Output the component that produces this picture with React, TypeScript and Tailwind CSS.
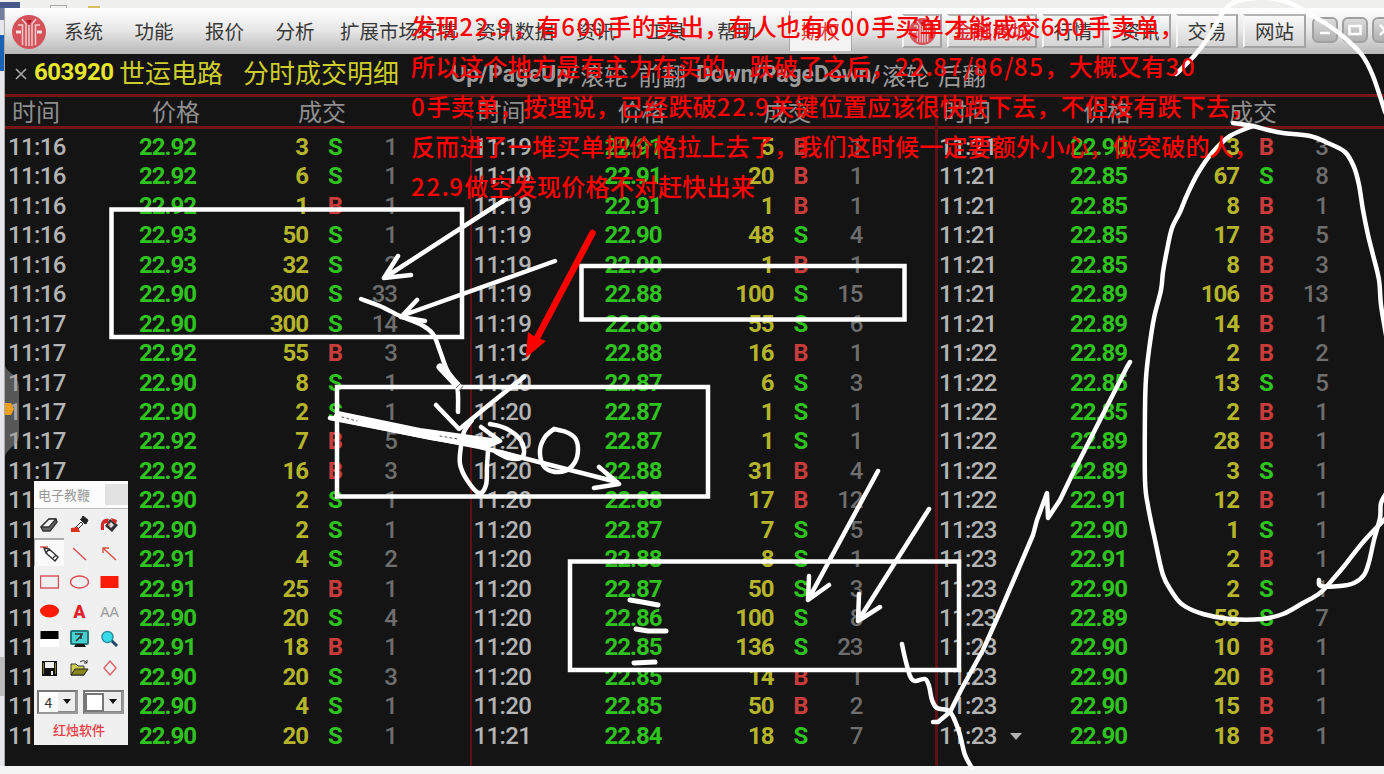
import React from "react";

type Row = [price: string, qty: number, side: "S" | "B", count: number];

const times = (spec: [string, number][]) => spec.flatMap(([t, n]) => Array<string>(n).fill(t));

const panels: { times: string[]; rows: Row[] }[] = [
  {
    times: times([["11:16", 6], ["11:17", 6], ["11:18", 9]]),
    rows: [
      ["22.92", 3, "S", 1], ["22.92", 6, "S", 1], ["22.92", 1, "B", 1], ["22.93", 50, "S", 1],
      ["22.93", 32, "S", 2], ["22.90", 300, "S", 33], ["22.90", 300, "S", 14], ["22.92", 55, "B", 3],
      ["22.90", 8, "S", 1], ["22.90", 2, "S", 1], ["22.92", 7, "B", 5], ["22.92", 16, "B", 3],
      ["22.90", 2, "S", 1], ["22.90", 2, "S", 1], ["22.91", 4, "S", 2], ["22.91", 25, "B", 1],
      ["22.90", 20, "S", 4], ["22.91", 18, "B", 1], ["22.90", 20, "S", 3], ["22.90", 4, "S", 1],
      ["22.90", 20, "S", 1],
    ],
  },
  {
    times: times([["11:19", 8], ["11:20", 12], ["11:21", 1]]),
    rows: [
      ["22.91", 5, "B", 1], ["22.91", 20, "B", 1], ["22.91", 1, "B", 1], ["22.90", 48, "S", 4],
      ["22.90", 1, "B", 1], ["22.88", 100, "S", 15], ["22.88", 55, "S", 6], ["22.88", 16, "B", 1],
      ["22.87", 6, "S", 3], ["22.87", 1, "S", 1], ["22.87", 1, "S", 1], ["22.88", 31, "B", 4],
      ["22.88", 17, "B", 12], ["22.87", 7, "S", 5], ["22.88", 8, "S", 1], ["22.87", 50, "S", 3],
      ["22.86", 100, "S", 8], ["22.85", 136, "S", 23], ["22.85", 14, "B", 1], ["22.85", 50, "B", 2],
      ["22.84", 18, "S", 7],
    ],
  },
  {
    times: times([["11:21", 7], ["11:22", 6], ["11:23", 8]]),
    rows: [
      ["22.90", 3, "B", 3], ["22.85", 67, "S", 8], ["22.85", 8, "B", 1], ["22.85", 17, "B", 5],
      ["22.85", 8, "B", 3], ["22.89", 106, "B", 13], ["22.89", 14, "B", 1], ["22.89", 2, "B", 2],
      ["22.85", 13, "S", 5], ["22.85", 2, "B", 1], ["22.89", 28, "B", 1], ["22.89", 3, "S", 1],
      ["22.91", 12, "B", 1], ["22.90", 1, "S", 1], ["22.91", 2, "B", 1], ["22.90", 2, "S", 1],
      ["22.89", 58, "S", 7], ["22.90", 10, "B", 1], ["22.90", 20, "B", 1], ["22.90", 15, "B", 1],
      ["22.90", 18, "B", 1],
    ],
  },
];

const noteLines = [
  "发现22.9，有600手的卖出，有人也有600手买单才能成交600手卖单，",
  "所以这个地方是有主力在买的，跌破了之后，22.87/86/85，大概又有30",
  "0手卖单，按理说，已经跌破22.9关键位置应该很快跌下去，不但没有跌下去，",
  "反而进了一堆买单把价格拉上去了，我们这时候一定要额外小心，做突破的人，",
  "22.9做空发现价格不对赶快出来",
];

// Smooth curve through every point of a freehand stroke.
function stroke(pts: [number, number][]) {
  let d = `M${pts[0][0]} ${pts[0][1]}`;
  for (let i = 0; i < pts.length - 1; i++) {
    const a = pts[i - 1] ?? pts[i];
    const b = pts[i];
    const c = pts[i + 1];
    const e = pts[i + 2] ?? c;
    d += `C${b[0] + (c[0] - a[0]) / 6} ${b[1] + (c[1] - a[1]) / 6} ${c[0] - (e[0] - b[0]) / 6} ${c[1] - (e[1] - b[1]) / 6} ${c[0]} ${c[1]}`;
  }
  return d;
}

const freehand: [number, number][][] = [
  [[361, 299], [380, 306], [400, 316], [420, 324], [433, 334], [440, 351], [447, 370], [457, 386], [458, 412]],
  [[472, 420], [464, 432], [461, 446], [460, 464], [467, 480], [479, 493], [486, 485], [487, 466], [488, 451]],
  [[490, 424], [505, 428], [519, 438], [524, 450], [521, 458], [508, 458], [496, 452]],
  [[554, 429], [545, 437], [540, 450], [543, 465], [551, 471], [565, 471], [575, 462], [578, 449], [575, 438], [566, 432], [554, 429]],
  [[902, 644], [905, 658], [910, 676], [915, 681], [925, 679], [929, 686], [932, 700], [937, 708], [949, 711], [955, 721], [960, 735], [965, 755], [972, 768]],
  [[1233, 123], [1253, 126], [1268, 130], [1283, 133], [1310, 136], [1328, 143], [1345, 152], [1354, 167], [1359, 185], [1363, 210], [1368, 235], [1373, 255], [1379, 280], [1381, 305], [1386, 335]],
  [[1253, 126], [1230, 136], [1212, 153], [1198, 173], [1187, 195], [1180, 212], [1172, 228], [1167, 250], [1163, 272], [1161, 290], [1154, 318], [1149, 350], [1146, 378], [1145, 410], [1145, 480], [1148, 506], [1155, 540], [1163, 575], [1172, 592], [1183, 605], [1203, 614], [1230, 619], [1262, 619], [1283, 614], [1303, 603], [1320, 593], [1334, 578], [1345, 565], [1364, 541], [1386, 518]],
  [[1319, 580], [1321, 586], [1340, 586], [1354, 583], [1364, 575], [1369, 562], [1374, 540], [1380, 518], [1381, 503], [1387, 492]],
  [[1176, 74], [1195, 55], [1208, 38], [1222, 14], [1233, 3], [1248, -1], [1270, -2], [1290, 3], [1308, 13], [1328, 25], [1345, 38], [1362, 55], [1373, 76], [1385, 112]],
];

function Logo({ size }: { size: number }) {
  return (
    <svg width={size} height={size} viewBox="0 0 34 34">
      <circle cx="17" cy="17" r="17" fill="#d4535b" />
      <g stroke="#f0cccc" strokeWidth="1.500" fill="none">
        <path d="M10 4 14 9V31M24 4 20 9V31M17 10V31M6 10H10.500V30M28 10H23.500V30" />
      </g>
      <path d="M14 5h6l-3 5z" fill="#b82030" />
      <path d="M4 17h5M25 17h5" stroke="#f7e0e0" strokeWidth="3" />
    </svg>
  );
}

function MenuItem({ children, w }: { children: string; w: string }) {
  return <span className={`shrink-0 ${w}`}>{children}</span>;
}

function BarButton({ children, w }: { children: React.ReactNode; w: string }) {
  return (
    <div
      className={`flex h-[34px] shrink-0 items-center justify-center border-2 border-[#f5f5f5] border-t-[#b4b4b4] border-r-[#a4a4a4] border-b-[#a4a4a4] bg-linear-to-b from-[#fafafa] to-[#d4d4d4] ${w}`}
    >
      {children}
    </div>
  );
}

function WindowButton({ children }: { children: React.ReactNode }) {
  return (
    <div className="flex h-[26px] w-[26px] shrink-0 items-center justify-center rounded-md border-2 border-[#a0a0a0] bg-linear-to-b from-[#dcdcdc] to-[#b0b0b0]">
      <svg width="16" height="16" viewBox="0 0 16 16" fill="none" stroke="#fff" strokeWidth="2.500">
        {children}
      </svg>
    </div>
  );
}

function MenuBar() {
  return (
    <div className="flex h-[46px] shrink-0 items-center overflow-hidden bg-linear-to-b from-white via-[#e6e6e6] to-[#b8b8b8] pl-[7px] text-[19.500px] leading-[48px] whitespace-nowrap text-[#383838]">
      <div className="w-[52px] shrink-0 pt-0.5">
        <Logo size={34} />
      </div>
      <MenuItem w="w-[70.500px]">系统</MenuItem>
      <MenuItem w="w-[70.500px]">功能</MenuItem>
      <MenuItem w="w-[70.500px]">报价</MenuItem>
      <MenuItem w="w-[64.500px]">分析</MenuItem>
      <MenuItem w="w-[136px]">扩展市场行情</MenuItem>
      <MenuItem w="w-[100px]">资讯数据</MenuItem>
      <MenuItem w="w-[71px]">资讯</MenuItem>
      <MenuItem w="w-[70px]">工具</MenuItem>
      <MenuItem w="w-[72px]">帮助</MenuItem>
      <div className="flex h-[40px] w-[63px] shrink-0 items-center justify-center border-x border-[#aaa] bg-[#f3f3f3] text-[#e04040]">
        期权
      </div>
      <div className="ml-[50px] flex items-center gap-[5px]">
        <BarButton w="w-[40px]">
          <Logo size={27} />
        </BarButton>
        <BarButton w="w-[90px]">
          <span className="font-medium text-[#dd3038]">金融商城</span>
        </BarButton>
        <BarButton w="w-[62px]">行情</BarButton>
        <BarButton w="w-[62px]">资讯</BarButton>
        <BarButton w="w-[62px]">交易</BarButton>
        <BarButton w="w-[63px]">网站</BarButton>
      </div>
      <div className="ml-[6px] flex gap-[4px] pb-[3px]">
        <WindowButton><path d="M3 11h10" /></WindowButton>
        <WindowButton><rect x="2.500" y="4" width="11" height="8" /></WindowButton>
        <WindowButton><path d="m3 3 10 10M13 3 3 13" /></WindowButton>
      </div>
    </div>
  );
}

function TitleRow() {
  return (
    <div className="flex h-[40px] shrink-0 items-center pl-[9px] text-[26px] leading-[36px] whitespace-nowrap text-[#cccc2a]">
      <svg className="mr-[6px] shrink-0" width="14" height="14" viewBox="0 0 14 14" stroke="#a8a8a8" strokeWidth="1.600">
        <path d="m2 2 10 10M12 2 2 12" />
      </svg>
      <span className="w-[85px] shrink-0 pb-1 font-['Roboto'] text-[24px] font-bold tracking-[-0.500px] text-[#e6e62c]">603920</span>
      <span className="w-[124px] shrink-0 pb-1">世运电路</span>
      <span className="w-[208px] shrink-0 pb-1">分时成交明细</span>
      <div className="flex pt-px text-[24px] text-[#9b9b9b]">
        <span className="w-[129px] font-['Roboto'] text-[23px] font-bold tracking-[0.1px]">Up/PageUp/</span>
        <span className="w-[58px]">滚轮</span>
        <span className="w-[58px]">前翻</span>
        <span className="w-[186px] font-['Roboto'] text-[23px] font-bold tracking-[-0.100px]">Down/PageDown/</span>
        <span className="w-[56px]">滚轮</span>
        <span>后翻</span>
      </div>
    </div>
  );
}

function Panel({ data, last }: { data: (typeof panels)[number]; last: boolean }) {
  return (
    <div className="flex h-full w-[465.500px] shrink-0 flex-col">
      <div className="grid h-[32px] shrink-0 grid-cols-[140px_146px_100px] border-b-[3px] border-[#741616] pl-[7px] text-[24px] leading-[27px] text-[#8e8e8e]">
        <span>时间</span>
        <span>价格</span>
        <span>成交</span>
      </div>
      <div className="flex flex-1 flex-col pt-[4px] font-['Roboto'] text-[24px] leading-[29.45px] font-bold tracking-[-1px]">
        {data.rows.map(([price, qty, side, count], i) => (
          <div key={i} className="grid h-[29.45px] shrink-0 grid-cols-[134px_60px_109px_54px_35px]">
            <span className="flex items-center pl-[3px] font-medium tracking-[-0.600px] text-[#b4b4b4]">
              {data.times[i]}
              {last && i === data.rows.length - 1 && (
                <svg className="ml-[13px]" width="12" height="7" viewBox="0 0 12 7" fill="#b0b0b0">
                  <path d="M0 0h12L6 7z" />
                </svg>
              )}
            </span>
            <span className="text-[#2fc31f]">{price}</span>
            <span className="text-right text-[#b5b52b]">{qty}</span>
            <span className={side === "S" ? "text-center text-[#2fc31f]" : "text-center text-[#c83c3c]"}>{side}</span>
            <span className="text-right font-medium text-[#6e6e6e]">{count}</span>
          </div>
        ))}
      </div>
    </div>
  );
}

const toolIcons: React.ReactNode[] = [
  <g key="eraser" stroke="#333" strokeWidth="1.400" strokeLinejoin="round"><path d="M1 11 9 3h7l1 3-7 9H3z" fill="#666" /><path d="M1 11 9 3h7l-7 8z" fill="#f4f4f4" /></g>,
  <g key="picker"><path d="m13 0 5 4-2 4-5-4zM10 3l5 5" fill="#222" stroke="#222" /><path d="m11 6 2 2-6 6-3 1 1-3z" fill="#fff" stroke="#333" /><path d="m1 12 7-1 2 5H1z" fill="#d8321f" /></g>,
  <g key="bucket"><path d="m10 3 8 6-6 7-7-6z" fill="#333" /><path d="m11 6 3 3-3 3-3-3z" fill="#ddd" /><path d="M1 14C0 5 3 2 9 3l-1 3 3 5-4-4-3 1v6zM11 2l6 2-1 4-4-3z" fill="#d42828" /></g>,
  <g key="pencil" fill="none"><path d="M0 3h8" stroke="#d33" strokeWidth="1.300" /><path d="m4 4 5 1 9 8-3 4-9-8zM6 9l3-4M13 14l3-3" stroke="#333" strokeWidth="1.400" /></g>,
  <path key="line" d="m3 3 13 12" stroke="#d65050" strokeWidth="1.400" />,
  <path key="arrow" d="m3 3 13 12M3 8V3h6" stroke="#dc5040" strokeWidth="1.400" fill="none" />,
  <rect key="rect" x="0.500" y="3" width="18" height="12" stroke="#dc4c54" strokeWidth="1.400" fill="none" />,
  <ellipse key="ellipse" cx="9.500" cy="9" rx="9" ry="6" stroke="#dc4c54" strokeWidth="1.400" fill="none" />,
  <rect key="frect" x="0.500" y="3" width="18" height="12" fill="#fa1c08" />,
  <ellipse key="fellipse" cx="9.500" cy="9" rx="9.500" ry="6.500" fill="#fa1c08" />,
  <text key="a" x="9.500" y="15.500" textAnchor="middle" fill="#e0222a" className="font-['Roboto'] text-[18px] font-black">A</text>,
  <text key="aa" x="9.500" y="15" textAnchor="middle" fill="#999" className="font-['Liberation_Sans'] text-[14px]">AA</text>,
  <g key="screen"><path d="M0 9h19v8H0z" fill="#fff" /><path d="M0.500 1h18v8h-18z" fill="#000" /></g>,
  <g key="monitor"><rect x="1" y="1" width="17" height="13" rx="1" fill="#48d0d0" stroke="#267878" strokeWidth="2" /><path d="m6 11 6-6M5 4h8M11 4v5" stroke="#333" strokeWidth="1.600" /><path d="M6 14h8l2 3H4z" fill="#111" /></g>,
  <g key="zoom"><path d="m11 10 6 6" stroke="#246" strokeWidth="3" /><circle cx="7.500" cy="7" r="5.500" fill="#36dce8" stroke="#2b8ea0" strokeWidth="1.400" /></g>,
  <g key="save"><rect x="2" y="2" width="15" height="15" fill="#111" /><path d="M5 3h9v6H5z" fill="#eee" /><path d="M3 4h1v11H3zM15 4h1v11h-1z" fill="#7e7e20" /><path d="M11 12h2v4h-2z" fill="#eee" /></g>,
  <g key="open"><path d="M1 5h5l2 2h6v9H1z" fill="#cfcf50" stroke="#333" /><path d="M1 16 5 10h13l-4 6z" fill="#86861c" stroke="#222" /><path d="M10 3q4-3 7 1V1M17 4h-3" fill="none" stroke="#222" /></g>,
  <path key="diamond" d="m10 2 6 7-6 7-6-7z" fill="none" stroke="#dc6068" strokeWidth="1.400" />,
];

function Combo({ children, w }: { children: React.ReactNode; w: string }) {
  return (
    <div className={`flex h-[24px] border-2 border-[#777] border-r-[#999] border-b-[#999] bg-white ${w}`}>
      <span className="flex flex-1 items-center justify-center text-[14px] leading-none text-[#333]">{children}</span>
      <span className="flex w-[18px] items-center justify-center border-r border-b border-[#888] bg-[#ededed]">
        <svg width="8" height="5" viewBox="0 0 8 5"><path d="M0 0h8L4 5z" fill="#111" /></svg>
      </span>
    </div>
  );
}

function ToolPalette() {
  return (
    <div className="absolute top-[481px] left-[34px] flex h-[264px] w-[94px] flex-col bg-[#f0f0f0]">
      <div className="flex h-[28px] items-start justify-between border-b border-[#bbb] bg-[#fcfcfc] pl-[4px]">
        <span className="text-[13px] leading-[28px] text-[#999]">电子教鞭</span>
        <span className="mt-[3px] h-[21px] w-[23px] bg-[#e2e2e2]" />
      </div>
      <div className="grid grid-cols-[30.300px_30.300px_30.300px]">
        {toolIcons.map((icon, i) => (
          <span
            key={i}
            className={
              i === 3
                ? "flex h-[28.500px] items-center justify-center border-t-2 border-l border-[#aaa] bg-[#fafafa]"
                : "flex h-[28.500px] items-center justify-center pt-1"
            }
          >
            <svg width="19" height="18" viewBox="0 0 19 18">{icon}</svg>
          </span>
        ))}
      </div>
      <div className="mt-[10px] flex gap-[5px] px-[3px]">
        <Combo w="w-[41px]">4</Combo>
        <Combo w="w-[41px]">
          <span className="h-[19px] w-[19px] border-2 border-[#777]" />
        </Combo>
      </div>
      <div className="pr-1 text-center text-[13px] leading-[32px] font-medium text-[#e83e48]">红烛软件</div>
    </div>
  );
}

function Ink() {
  return (
    <svg className="absolute inset-0" width="1384" height="774" viewBox="0 0 1384 774" fill="none" stroke="#fff" strokeWidth="4.500" strokeLinecap="round" strokeLinejoin="round">
      <g strokeLinejoin="miter">
        <rect x="111.500" y="209.500" width="350.500" height="127.500" />
        <rect x="581.500" y="266" width="323" height="53.500" />
        <rect x="337" y="387" width="371" height="109.500" />
        <rect x="570" y="561.500" width="389" height="108.500" />
      </g>
      {freehand.map((pts, i) => (
        <path key={i} d={stroke(pts)} />
      ))}
      <path d="M506 199 384 278M398 256 384 278 411 275" />
      <path d="M555 261 401 316M417 300 401 317 425 321" />
      <path d="M440 367 458 386" strokeWidth="7" />
      <path d="m456 388 5-5M459 391l4-5" stroke="#666" strokeWidth="1" />
      <path d="M436 405 459 429 462 427 490 404 524 377" />
      <path d="M330 418 480 447 617 482M599 467 619 484 594 488" />
      <path d="M481 427 500 441 485 447M500 452 520 458" />
      <path d="M338 412 420 429 499 440 480 447 430 439 332 419Z" fill="#fff" strokeWidth="2" />
      <path d="m342 417 15 4M440 436l18 3" stroke="#555" strokeWidth="1" strokeDasharray="2 3" />
      <path d="M878 471 808 600M809 576 808 600 829 585" />
      <path d="M929 509 858 621M859 594 858 621 880 607" />
      <path d="M630 600 642 602 658 605M636 629 648 631 666 631M634 663 655 662" strokeWidth="5" />
      <path d="M933 722H938L950 712 961 690 983 650 1000 612 1033 535 1037 520 1047 493 1048 518 1060 500 1072 475 1127 367 1130 362" />
      <path d="M592.500 233 537 338" stroke="#f00" strokeWidth="6.500" />
      <path d="M525.500 358 528 332 535 337 546 341z" fill="#f00" stroke="none" />
    </svg>
  );
}

function Notes() {
  return (
    <div className="absolute top-[6px] left-[411px] text-[24px] leading-[40px] font-medium tracking-[0.200px] whitespace-nowrap text-[#ff0000]">
      {noteLines.map((line) => (
        <div key={line} className="h-[40px]">
          {line.split(/(\d+)/).map((part, i) =>
            i % 2 ? <span key={i} className="tracking-[1.700px]">{part}</span> : part,
          )}
        </div>
      ))}
    </div>
  );
}

export default function App() {
  return (
    <div className="relative flex h-[774px] w-[1384px] flex-col overflow-hidden bg-[#f4f4f5] font-['Noto_Sans_CJK_SC',sans-serif]">
      <div className="flex h-[8px] shrink-0 items-end bg-[#efefee]">
        <span className="h-[6px] w-[20px] bg-[#485a8c]" />
        <span className="ml-[30px] h-[3px] w-[17px] border border-b-0 border-[#aaa]" />
        <span className="ml-[21px] h-[2px] w-[12px] bg-[#d8c060]" />
      </div>
      <div className="flex h-[758px] shrink-0">
        <div className="flex w-[5px] shrink-0 flex-col border-r border-[#aaa] bg-[#e6e6ea]">
          <span className="h-[12px] bg-[#7580a0]" />
          <span className="mt-[15px] h-[36px] bg-[#1c62b4]" />
          <span className="mt-[586px] h-[39px] bg-[#bbb]" />
        </div>
        <div className="flex w-[1379px] shrink-0 flex-col overflow-hidden bg-[#141414]">
          <MenuBar />
          <TitleRow />
          <div className="flex flex-1 border-t-[3px] border-[#741616]">
            {panels.map((p, i) => (
              <React.Fragment key={i}>
                {i > 0 && <span className="z-0 -mr-[1.500px] -ml-[1px] w-[2.500px] shrink-0 bg-[#5e1016]" />}
                <Panel data={p} last={i === 2} />
              </React.Fragment>
            ))}
          </div>
        </div>
      </div>
      <svg className="absolute top-[366px] left-[5px]" width="16" height="90" viewBox="0 0 16 90">
        <path d="M0 0C3 8 14 8 14 22V68C14 80 4 80 0 90Z" fill="#999" opacity="0.5" />
        <path d="M0 37H6L9 43 6 49H0Z" fill="#f0a018" />
      </svg>
      <ToolPalette />
      <Ink />
      <Notes />
    </div>
  );
}
